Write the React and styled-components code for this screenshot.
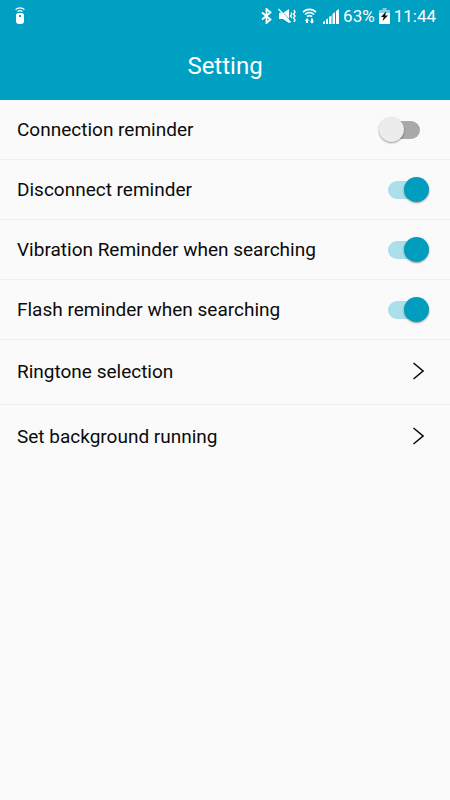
import { useState } from "react";
import styled, { createGlobalStyle } from "styled-components";

const GlobalStyle = createGlobalStyle`
  * {
    box-sizing: border-box;
  }

  body {
    margin: 0;
    background-color: #fafafa;
    font-family: Roboto, "Noto Sans", sans-serif;
    color: #0a0a0a;
  }
`;

const StHeader = styled.header`
  background-color: #00a0c3;
  color: white;
`;

const StStatusBar = styled.div`
  display: flex;
  align-items: center;
  justify-content: space-between;
  height: 32px;
  padding: 0 14px;

  font-size: 17px;
  line-height: 20px;
`;

const StStatusGroup = styled.div`
  display: flex;
  align-items: center;
  gap: ${(props) => props.$gap};
`;

const StIcon = styled.svg`
  display: block;
  flex: none;
  fill: ${(props) => (props.$line ? "none" : "currentColor")};
  stroke: ${(props) => (props.$line ? "currentColor" : "none")};
`;

const StTitle = styled.h1`
  margin: 0;
  height: 68px;

  font-size: 24px;
  font-weight: 400;
  line-height: 68px;
  text-align: center;
`;

const StList = styled.ul`
  margin: 0;
  padding: 0;
  list-style: none;
`;

const StItem = styled.li`
  border-bottom: 1px solid #efefef;

  &:last-child {
    border-bottom: none;
  }
`;

const StSwitchRow = styled.label`
  display: flex;
  align-items: center;
  justify-content: space-between;
  height: 59px;
  padding: 0 21px 0 17px;

  font-size: 19px;
  cursor: pointer;
`;

const StLinkRow = styled.button`
  display: flex;
  align-items: center;
  justify-content: space-between;
  width: 100%;
  height: 64px;
  padding: 0 26px 2px 17px;

  border: none;
  background: none;
  color: inherit;

  font-family: inherit;
  font-size: 19px;
  cursor: pointer;
`;

const StSwitch = styled.input`
  appearance: none;
  display: flex;
  align-items: center;
  flex: none;
  width: 50px;
  height: 26px;
  margin: 0;
  padding: 0 9px;
  position: relative;
  cursor: pointer;

  &::before {
    content: "";
    flex: 1;
    height: 18px;
    border-radius: 9px;
    background-color: #a9a9a9;
  }

  &::after {
    content: "";
    position: absolute;
    left: 0;
    width: 25px;
    height: 25px;
    border-radius: 50%;
    background-color: #ececec;
    box-shadow: 0 1px 2px rgba(0, 0, 0, 0.4);
  }

  &:checked::before {
    background-color: #abdfe9;
  }

  &:checked::after {
    left: 25px;
    background-color: #009dbf;
  }
`;

const MouseIcon = () => (
  <StIcon width="12" height="18" viewBox="0 0 12 18">
    <path d="M1.500 2.600C4 .2 8 .2 10.500 2.600" fill="none" stroke="currentColor" strokeWidth="1.300" />
    <path d="M3.500 4.600c1.500-1.300 3.500-1.300 5 0" fill="none" stroke="currentColor" strokeWidth="1.200" />
    <path
      fillRule="evenodd"
      d="M4.500 6h3A2.500 2.500 0 0 1 10 8.500V14a3 3 0 0 1-3 3H5a3 3 0 0 1-3-3V8.500A2.500 2.500 0 0 1 4.500 6zM5 8v2h2V8z"
    />
  </StIcon>
);

const BluetoothIcon = () => (
  <StIcon $line width="11" height="16" viewBox="0 0 11 16">
    <path d="M1 4.500l8.500 7L5.500 15V1l4 3.500-8.500 7" strokeWidth="1.800" />
  </StIcon>
);

const MuteIcon = () => (
  <StIcon width="18" height="16" viewBox="0 0 18 16">
    <path d="M1 5h4l6-4v14l-6-4H1z" />
    <path d="M1.800 1l10.500 11.500" stroke="#00a0c3" strokeWidth="0.700" />
    <path d="M.5 1l12 13.500" fill="none" stroke="currentColor" strokeWidth="1.500" />
    <path
      d="M13 4.500l.8 1.500-1.300 2 1.300 2M16 2l1 2-1.400 2L17 8l-1.400 2 1.400 2-1 2"
      fill="none"
      stroke="currentColor"
      strokeWidth="1.400"
    />
  </StIcon>
);

const WifiIcon = () => (
  <StIcon width="15" height="16" viewBox="0 0 15 16">
    <g fill="none" stroke="currentColor" strokeWidth="1.600">
      <path d="M1 4.200C4.500.4 10.500.4 14 4.200" />
      <path d="M3 6.500c2.600-2.500 6.400-2.500 9 0" />
      <path d="M5 8.700c1.500-1.300 3.500-1.300 5 0" />
    </g>
    <path d="M5 10l2.200 2.800H6V15H4v-2.200H2.800zM10 15.800L7.800 13H9v-2.500h2V13h1.200z" />
  </StIcon>
);

const SignalIcon = () => (
  <StIcon width="16" height="16" viewBox="0 0 16 16">
    <path d="M0 14l2-1v3H0zM3 11.500l2-1V16H3zM6 9l2.500-1.500V16H6zM9.500 6L12 4v12H9.500zM13 3l3-2v15h-3z" />
  </StIcon>
);

const BatteryIcon = () => (
  <StIcon width="11" height="16" viewBox="0 0 11 16">
    <path d="M3.500 0h4v2H11v3H0V2h3.500z" opacity="0.500" />
    <path d="M0 5h11v11H0z" />
    <path d="M7 3.500L2 9h2.700l-1.200 4L9 7.500H6.200z" fill="#0a0a0a" />
  </StIcon>
);

const ChevronIcon = () => (
  <StIcon $line width="12" height="18" viewBox="0 0 12 18">
    <path d="M1.500 1l9.500 8-9.500 8" strokeWidth="1.500" />
  </StIcon>
);

const StatusBar = () => (
  <StStatusBar>
    <MouseIcon />
    <StStatusGroup $gap="4px">
      <StStatusGroup $gap="6px">
        <BluetoothIcon />
        <MuteIcon />
        <WifiIcon />
        <SignalIcon />
      </StStatusGroup>
      <span>63%</span>
      <BatteryIcon />
      <span>11:44</span>
    </StStatusGroup>
  </StStatusBar>
);

const SwitchItem = ({ title, defaultOn }) => {
  const [on, setOn] = useState(defaultOn);

  return (
    <StItem>
      <StSwitchRow>
        {title}
        <StSwitch
          type="checkbox"
          role="switch"
          checked={on}
          onChange={(e) => setOn(e.target.checked)}
        />
      </StSwitchRow>
    </StItem>
  );
};

const LinkItem = ({ title }) => (
  <StItem>
    <StLinkRow type="button">
      {title}
      <ChevronIcon />
    </StLinkRow>
  </StItem>
);

const App = () => {
  return (
    <>
      <GlobalStyle />
      <StHeader>
        <StatusBar />
        <StTitle>Setting</StTitle>
      </StHeader>
      <main>
        <StList>
          <SwitchItem title="Connection reminder" defaultOn={false} />
          <SwitchItem title="Disconnect reminder" defaultOn={true} />
          <SwitchItem title="Vibration Reminder when searching" defaultOn={true} />
          <SwitchItem title="Flash reminder when searching" defaultOn={true} />
          <LinkItem title="Ringtone selection" />
          <LinkItem title="Set background running" />
        </StList>
      </main>
    </>
  );
};

export default App;
